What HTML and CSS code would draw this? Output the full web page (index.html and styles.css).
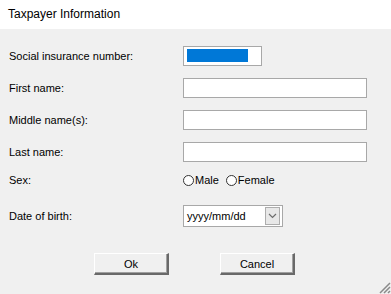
FILE: index.html
```html
<!DOCTYPE html>
<html>
<head>
<meta charset="utf-8">
<link rel="stylesheet" href="styles.css">
</head>
<body>
<div class="window">
  <div class="titlebar">Taxpayer Information</div>
  <div class="content">
    <div class="row r-sin">
      <div class="label">Social insurance number:</div>
      <div class="field"><div class="textbox sin"><span class="sel"></span></div></div>
    </div>
    <div class="row r-text">
      <div class="label">First name:</div>
      <div class="field"><div class="textbox wide"></div></div>
    </div>
    <div class="row r-text">
      <div class="label">Middle name(s):</div>
      <div class="field"><div class="textbox wide"></div></div>
    </div>
    <div class="row r-text">
      <div class="label">Last name:</div>
      <div class="field"><div class="textbox wide"></div></div>
    </div>
    <div class="row r-sex">
      <div class="label">Sex:</div>
      <div class="field radios">
        <span class="radio"><span class="circle"></span>Male</span>
        <span class="radio"><span class="circle"></span>Female</span>
      </div>
    </div>
    <div class="row r-date">
      <div class="label">Date of birth:</div>
      <div class="field">
        <div class="combo"><span class="combo-text">yyyy/mm/dd</span><span class="drop"><svg width="9" height="6" viewBox="0 0 9 6"><path d="M1 1 L4.5 4.5 L8 1" fill="none" stroke="#6d6d6d" stroke-width="1.2"/></svg></span></div>
      </div>
    </div>
    <div class="buttons">
      <div class="btn ok">Ok</div>
      <div class="btn cancel">Cancel</div>
    </div>
  </div>
  <div class="grip"><svg width="14" height="14" viewBox="0 0 14 14"><path d="M13 3 L3 13 M13 7 L7 13 M13 11 L11 13" stroke="#8a8a8a" stroke-width="1.5"/></svg></div>
</div>
</body>
</html>
```
FILE: styles.css
```css
html, body {
  margin: 0;
  padding: 0;
}
body {
  width: 391px;
  height: 294px;
  overflow: hidden;
  font-family: "Liberation Sans", Arial, sans-serif;
  font-size: 11px;
  color: #000;
}
.window {
  position: relative;
  width: 391px;
  height: 294px;
  background: #f0f0f0;
}
.titlebar {
  height: 29px;
  background: #fff;
  font-size: 12px;
  line-height: 29px;
  padding-left: 8px;
  box-sizing: border-box;
}
.content {
  padding-top: 17px;
  display: flex;
  flex-direction: column;
}
.row {
  display: flex;
  align-items: center;
}
.label {
  width: 174px;
  padding-left: 9px;
}
.field {
  display: flex;
  align-items: center;
}
.r-sin, .r-text { height: 20px; }
.r-text { margin-top: 12px; }
.r-sex { height: 20px; margin-top: 8px; }
.r-date { height: 22px; margin-top: 15px; }
.textbox {
  box-sizing: border-box;
  height: 20px;
  background: #fff;
  border: 1px solid #a8a8a8;
}
.textbox.sin {
  width: 79px;
  padding: 2px 0 0 3px;
}
.sel {
  display: block;
  width: 61px;
  height: 13px;
  background: #0078d7;
}
.textbox.wide { width: 184px; }
.radio {
  display: inline-flex;
  align-items: center;
  margin-right: 7px;
}
.circle {
  width: 9px;
  height: 9px;
  border: 1px solid #333;
  border-radius: 50%;
  background: #fff;
  margin-right: 1px;
}
.combo {
  box-sizing: border-box;
  width: 100px;
  height: 22px;
  background: #fff;
  border: 1px solid #a8a8a8;
  display: flex;
  align-items: center;
  justify-content: space-between;
  padding: 1px 2px 1px 3px;
}
.drop {
  box-sizing: border-box;
  width: 15px;
  height: 18px;
  background: #e8e8e8;
  border: 1px solid #adadad;
  display: flex;
  align-items: center;
  justify-content: center;
}
.buttons {
  display: flex;
  margin-top: 26px;
  padding-left: 94px;
  gap: 51px;
}
.btn {
  box-sizing: border-box;
  width: 75px;
  height: 22px;
  display: flex;
  align-items: center;
  justify-content: center;
  background: #f0f0f0;
  border-top: 1px solid #fff;
  border-left: 1px solid #fff;
  border-right: 2px solid #696969;
  border-bottom: 2px solid #696969;
  box-shadow: inset -1px -1px 0 #a0a0a0;
}
.grip {
  position: absolute;
  right: 0;
  bottom: 0;
  width: 14px;
  height: 14px;
}
```
